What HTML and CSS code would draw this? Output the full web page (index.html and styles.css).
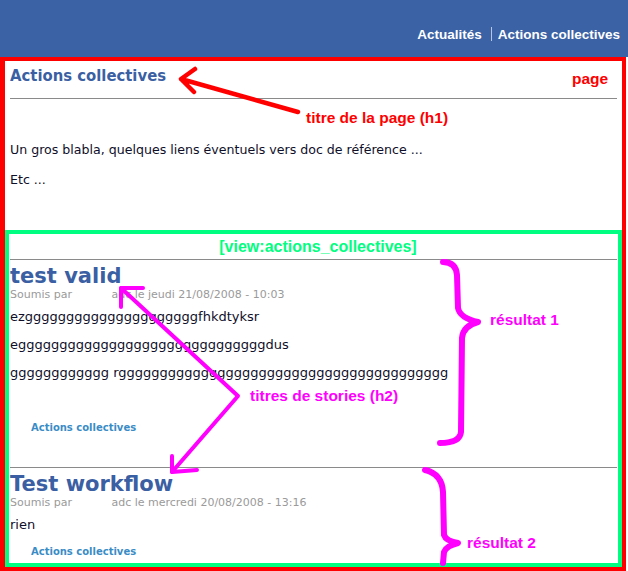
FILE: index.html
```html
<!DOCTYPE html>
<html lang="fr">
<head>
<meta charset="utf-8">
<title>Actions collectives</title>
<link rel="stylesheet" href="styles.css">
</head>
<body>
<header class="top">
  <nav class="menu">
    <a class="menu-item" href="#">Actualités</a>
    <span class="menu-sep"></span>
    <a class="menu-item" href="#">Actions collectives</a>
  </nav>
</header>
<div class="page">
  <div class="intro">
    <h1 class="page-title">Actions collectives</h1>
    <p class="intro-text first">Un gros blabla, quelques liens éventuels vers doc de référence ...</p>
    <p class="intro-text">Etc ...</p>
  </div>
  <div class="view">
    <div class="view-head">[view:actions_collectives]</div>
    <div class="story story-first">
      <h2 class="story-title">test valid</h2>
      <div class="submitted">Soumis par <span class="author"></span>adc le jeudi 21/08/2008 - 10:03</div>
      <p class="story-text">ezgggggggggggggggggggggfhkdtyksr</p>
      <p class="story-text">eggggggggggggggggggggggggggggggdus</p>
      <p class="story-text">gggggggggggg rgggggggggggggggggggggggggggggggggggggggg</p>
      <p class="story-text">&nbsp;</p>
      <div class="links"><a class="term" href="#">Actions collectives</a></div>
    </div>
    <div class="story story-last">
      <h2 class="story-title">Test workflow</h2>
      <div class="submitted">Soumis par <span class="author"></span>adc le mercredi 20/08/2008 - 13:16</div>
      <p class="story-text">rien</p>
      <div class="links"><a class="term" href="#">Actions collectives</a></div>
    </div>
  </div>
</div>
<svg class="notes" width="628" height="571" viewBox="0 0 628 571">
  <g class="note-red">
    <path d="M298,112 L181,79 M195,69 L181,79 L194,92" />
  </g>
  <g class="note-pink">
    <path d="M121,288 L238,396 L172,472" />
    <path d="M143,288 L121,288 L121,307" />
    <path d="M172,456 L172,472 L197,470" />
    <path class="brace" d="M443,262 Q456,262 457,275 L458,308 Q460,318 478,322 Q463,326 462,338 L461,432 Q460,443 440,443" />
    <path class="brace" d="M425,470 Q442,474 443,492 L444,535 Q446,541 458,543 Q446,546 444,552 L443,563" />
  </g>
  <text class="label red" x="572" y="84">page</text>
  <text class="label red" x="306" y="123">titre de la page (h1)</text>
  <text class="label pink" x="490" y="325">résultat 1</text>
  <text class="label pink" x="250" y="401">titres de stories (h2)</text>
  <text class="label pink" x="467" y="548">résultat 2</text>
</svg>
</body>
</html>
```
FILE: styles.css
```css
* { box-sizing: border-box; }
html, body { margin: 0; padding: 0; background: #fff; }
body {
  width: 628px;
  height: 571px;
  overflow: hidden;
  position: relative;
  font-family: "DejaVu Sans", sans-serif;
  color: #111;
}
.top {
  height: 57px;
  background: #3b62a5;
  padding-top: 27px;
}
.menu {
  display: flex;
  justify-content: flex-end;
  align-items: flex-start;
  padding-right: 8px;
}
.menu-item {
  font-family: "Liberation Sans", Arial, sans-serif;
  font-weight: bold;
  font-size: 13.5px;
  line-height: 16px;
  color: #fff;
  text-decoration: none;
}
.menu-sep {
  width: 1px;
  height: 14px;
  background: #b7c6e0;
  margin: 0 6px 0 9px;
}
.page {
  width: 626px;
  height: 514px;
  border: 4px solid #ff0000;
  border-left-width: 5px;
  display: flex;
  flex-direction: column;
}
.intro {
  flex: 0 0 auto;
  padding: 5px 5px 0 5px;
  height: 169px;
}
.page-title {
  margin: 0;
  font-family: "DejaVu Sans", sans-serif;
  font-stretch: condensed;
  font-weight: bold;
  font-size: 16.5px;
  line-height: 20px;
  color: #3b5fa3;
  padding-bottom: 12px;
  border-bottom: 1px solid #8a8a8a;
}
.intro-text {
  margin: 13px 0 0;
  font-family: "DejaVu Sans", sans-serif;
  font-size: 12.6px;
  line-height: 17px;
  color: #0f0f2a;
}
.intro-text.first { margin-top: 42px; }
.view {
  flex: 1 1 auto;
  border: 4px solid #00ff80;
  padding: 0 0 4px 1px;
}
.view-head {
  font-family: "Liberation Sans", Arial, sans-serif;
  font-weight: bold;
  font-size: 16px;
  line-height: 16px;
  color: #00ff80;
  text-align: center;
  padding: 5px 0 4px 9px;
  border-bottom: 1px solid #8a8a8a;
  margin-right: 1px;
}
.story {
  padding-top: 5px;
  margin-right: 1px;
}
.story-first {
  padding-bottom: 32px;
  border-bottom: 1px solid #8a8a8a;
}
.story-title {
  margin: 0;
  font-family: "DejaVu Sans", sans-serif;
  font-weight: bold;
  font-size: 21px;
  line-height: 23px;
  color: #3b5fa3;
}
.submitted {
  font-size: 11px;
  line-height: 14px;
  color: #9a9a9a;
}
.author {
  display: inline-block;
  width: 36px;
}
.story-text {
  margin: 7px 0 0;
  font-size: 13px;
  line-height: 16px;
  color: #0f0f2a;
}
.story-text + .story-text { margin-top: 12px; }
.links {
  margin-top: 12px;
  padding-left: 21px;
  font-size: 10px;
  line-height: 14px;
}
.term {
  font-family: "DejaVu Sans", sans-serif;
  font-weight: bold;
  font-size: 10px;
  color: #3a8cc6;
  text-decoration: none;
}
.notes {
  position: absolute;
  left: 0;
  top: 0;
  pointer-events: none;
}
.notes path {
  fill: none;
  stroke-linecap: round;
  stroke-linejoin: round;
}
.note-red path { stroke: #ff0000; stroke-width: 4.5; }
.note-pink path { stroke: #ff00ff; stroke-width: 4; }
.note-pink path.brace { stroke-width: 6; }
.label {
  font-family: "Liberation Sans", Arial, sans-serif;
  font-weight: bold;
  font-size: 15.5px;
}
.label.red { fill: #ff0000; }
.label.pink { fill: #ff00ff; }
```
